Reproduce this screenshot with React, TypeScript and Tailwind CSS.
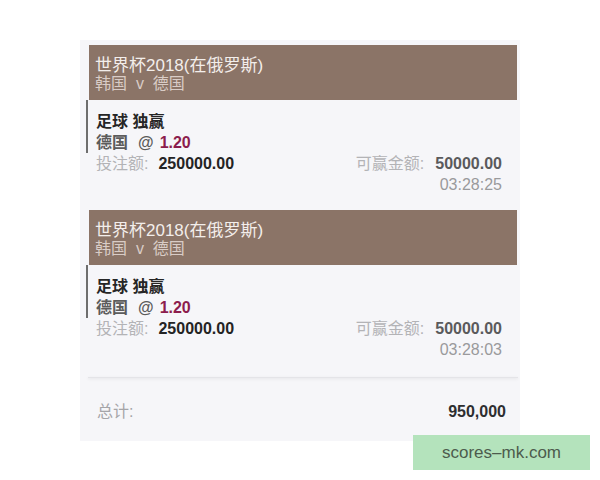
const FONT = "font-['Liberation_Sans','Noto_Sans_CJK_SC',sans-serif]";

interface Bet {
  league: string;
  match:  string;
  market: string;
  pick:   string;
  odds:   string;
  stake:  string;
  win:    string;
  time:   string;
}

const BETS: Bet[] = [
  { league: "世界杯2018(在俄罗斯)", match: "韩国  v  德国", market: "足球 独赢", pick: "德国", odds: "1.20", stake: "250000.00", win: "50000.00", time: "03:28:25" },
  { league: "世界杯2018(在俄罗斯)", match: "韩国  v  德国", market: "足球 独赢", pick: "德国", odds: "1.20", stake: "250000.00", win: "50000.00", time: "03:28:03" },
];

function BetCard({ bet, last }: { bet: Bet; last: boolean }) {
  return (
    <div className={`ml-[6px] w-[431px] ${last ? "pb-[17px]" : "pb-[15px]"}`}>
      <div className="ml-[3px] h-[55px] bg-[#8b7467] pl-[6px] pt-[12px] leading-[18px]">
        <div className="text-[17px] text-[#f3eeeb] whitespace-pre">{bet.league}</div>
        <div className="text-[16px] text-[#d9ccc6] whitespace-pre">{bet.match}</div>
      </div>
      <div className="pr-[15px] text-[16px] leading-[21px]">
        <div className="border-l-2 border-[#6e6e6e] pl-[8px] pt-[11px]">
          <div className="font-bold text-[#262626]">{bet.market}</div>
          <div className="flex items-center font-bold text-[#5c5c5c]">
            <span>{bet.pick}</span>
            <span className="ml-[10px]">@</span>
            <span className="ml-[6px] text-[#8c1d4d]">{bet.odds}</span>
          </div>
        </div>
        <div className="flex items-center justify-between pl-[10px]">
          <div>
            <span className="text-[#b3b3b6]">投注额:</span>
            <span className="ml-[10px] font-bold text-[#242424]">{bet.stake}</span>
          </div>
          <div>
            <span className="text-[#b3b3b6]">可赢金额:</span>
            <span className="ml-[11px] font-bold text-[#5a5a5c]">{bet.win}</span>
          </div>
        </div>
        <div className="text-right text-[#9a9a9c]">{bet.time}</div>
      </div>
    </div>
  );
}

export default function App() {
  return (
    <div className={`relative h-[480px] w-[600px] bg-white ${FONT}`}>
      <div className="pl-[80px] pt-[40px]">
        <div className="w-[440px] bg-[#f6f6f9] pt-[5px]">
          {BETS.map((b, i) => <BetCard key={i} bet={b} last={i === BETS.length - 1} />)}
          <div className="ml-[8px] w-[430px] h-px bg-[#e4e4e8] shadow-[0_1px_3px_rgba(0,0,0,0.12)]" />
          <div className="flex items-center justify-between pl-[17px] pr-[14px] pt-[23px] pb-[18px] text-[16px] leading-[22px]">
            <span className="text-[#a5a5a8]">总计:</span>
            <span className="font-bold text-[#2e2e30]">950,000</span>
          </div>
        </div>
      </div>
      <div className="absolute left-[413px] top-[435px] flex h-[35px] w-[177px] items-center justify-center bg-[#b4e3bc] text-[17px] text-[#4d5b4d]">
        scores–mk.com
      </div>
    </div>
  );
}
